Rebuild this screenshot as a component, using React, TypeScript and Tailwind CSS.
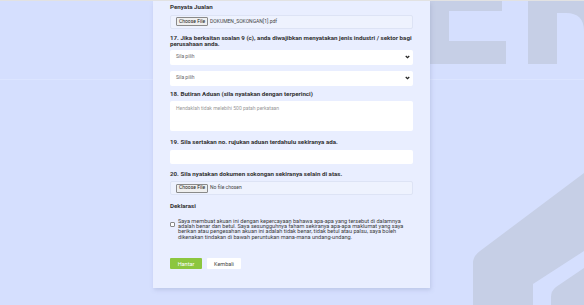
import React from "react";

const label = "text-[6.2px] leading-[6.5px] font-bold text-[#333] whitespace-nowrap";

function FileBox({ name }: { name: string }) {
  return (
    <div className="h-[14px] w-full rounded-[2px] border border-[#dde3f5] bg-[#eef2fe] flex items-center pl-[5px] gap-[2px]">
      <span className="h-[9px] px-[2px] flex items-center border border-[#8a8a8a] rounded-[1px] bg-[#efefef] text-[5px] text-[#222]">
        Choose File
      </span>
      <span className="text-[5px] text-[#444]">{name}</span>
    </div>
  );
}

function Select() {
  return (
    <div className="h-[15px] w-full rounded-[2px] bg-white flex items-center justify-between pl-[6px] pr-[3px]">
      <span className="text-[5px] text-[#666]">Sila pilih</span>
      <svg width="5" height="4" viewBox="0 0 10 8">
        <path d="M1.5 2 L5 5.5 L8.5 2" stroke="#222" strokeWidth="2.4" fill="none" />
      </svg>
    </div>
  );
}

export default function App() {
  return (
    <div
      className="relative w-[584px] h-[305px] overflow-hidden bg-[#d5dffe] border-t border-[#e2e2e2]"
      style={{ fontFamily: "Roboto, 'Noto Sans', sans-serif" }}
    >
      <svg className="absolute left-0 top-0" width="584" height="305" viewBox="0 0 584 305">
        <path d="M428 0 H502 V10 H449 V40 H506 V63 H428 Z" fill="#c6cfe6" />
        <path d="M528 0 H584 V63 H584 V30 Q584 12 566 12 H557 V63 H528 Z" fill="#c6cfe6" />
        <path d="M473 262 Q473 255 480 250 L584 172 V305 H473 Z" fill="#c6cfe6" />
        <path d="M533 283 L584 250 V267 L556 286 Q551 290 551 296 V305 H533 Z" fill="#d5dffe" />
        <rect x="0" y="78" width="584" height="1" fill="#dce5ff" />
      </svg>

      <div className="relative ml-[153px] w-[277px] h-[287px] bg-[#e9eeff] shadow-[1px_2px_4px_rgba(120,130,170,0.25)] px-[17px] pt-[3px] flex flex-col">
        <div className={label}>Penyata Jualan</div>
        <div className="mt-[4px]">
          <FileBox name="DOKUMEN_SOKONGAN[1].pdf" />
        </div>
        <div className={label + " mt-[6px]"}>
          17. Jika berkaitan soalan 9 (c), anda diwajibkan menyatakan jenis industri / sektor bagi
          <br />
          perusahaan anda.
        </div>
        <div className="mt-[2px]">
          <Select />
        </div>
        <div className="mt-[6px]">
          <Select />
        </div>
        <div className={label + " mt-[5px]"}>18. Butiran Aduan (sila nyatakan dengan terperinci)</div>
        <div className="mt-[4px] h-[30px] w-full rounded-[2px] bg-white pl-[6px] pt-[4px] text-[5px] text-[#999]">
          Hendaklah tidak melebihi 500 patah perkataan
        </div>
        <div className={label + " mt-[8px]"}>19. Sila sertakan no. rujukan aduan terdahulu sekiranya ada.</div>
        <div className="mt-[4px] h-[14px] w-full rounded-[2px] bg-white" />
        <div className={label + " mt-[7px]"}>20. Sila nyatakan dokumen sokongan sekiranya selain di atas.</div>
        <div className="mt-[4px]">
          <FileBox name="No file chosen" />
        </div>
        <div className={label + " mt-[8px]"}>Deklarasi</div>
        <div className="mt-[9px] flex items-start gap-[3px]">
          <div className="mt-[3px] w-[5px] h-[5px] shrink-0 border border-[#888] rounded-[1px] bg-white" />
          <div className="text-[5.6px] leading-[5.4px] text-[#3a3a3a] pr-[4px]">
            Saya membuat akuan ini dengan kepercayaan bahawa apa-apa yang tersebut di dalamnya adalah benar dan betul. Saya sesungguhnya faham sekiranya apa-apa maklumat yang saya berikan atau pengesahan akuan ini adalah tidak benar, tidak betul atau palsu, saya boleh dikenakan tindakan di bawah peruntukan mana-mana undang-undang.
          </div>
        </div>
        <div className="mt-[18px] flex gap-[5px]">
          <div className="h-[11px] w-[32px] rounded-[1px] bg-[#8cc63f] text-white text-[5.5px] flex items-center justify-center">
            Hantar
          </div>
          <div className="h-[11px] w-[34px] rounded-[1px] bg-white text-[#444] text-[5.5px] flex items-center justify-center">
            Kembali
          </div>
        </div>
      </div>
    </div>
  );
}
